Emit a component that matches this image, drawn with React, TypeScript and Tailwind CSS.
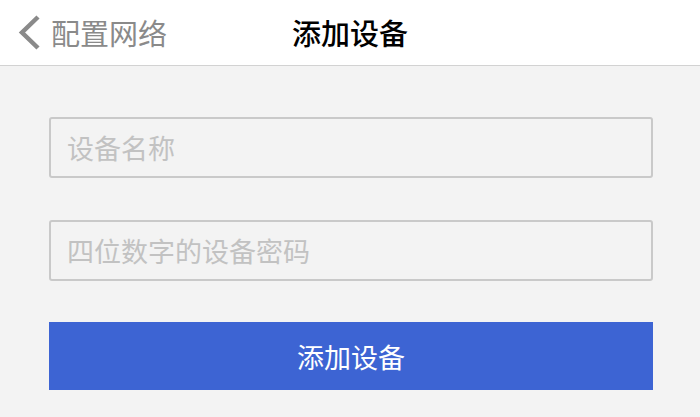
export default function App() {
  return (
    <div
      className="w-[700px] h-[417px] bg-[#f3f3f3] flex flex-col overflow-hidden"
      style={{ fontFamily: '"Noto Sans CJK SC", "Noto Sans", sans-serif' }}
    >
      {/* Header */}
      <div className="relative h-[66px] shrink-0 bg-white border-b border-[#d2d2d2] flex items-center">
        <div className="flex items-center pl-[18px] gap-[10px] text-[#8a8a8a]">
          <svg width="23" height="35" viewBox="0 0 23 35" fill="none">
            <path d="M20 2L4 17.5L20 33" stroke="#8a8a8a" strokeWidth="4.5" strokeLinecap="butt" strokeLinejoin="miter" />
          </svg>
          <span className="text-[29px] leading-none">配置网络</span>
        </div>
        <div className="absolute inset-0 flex items-center justify-center pointer-events-none">
          <span className="text-[29px] leading-none font-medium text-black">添加设备</span>
        </div>
      </div>

      {/* Form */}
      <div className="flex flex-col px-[49px] pt-[51px] w-[702px]">
        <div className="h-[61px] w-[604px] rounded-[3px] border-2 border-[#c9c9c9] bg-[#f3f3f3] flex items-center pl-[16px]">
          <span className="text-[27px] leading-none text-[#c2c2c2]">设备名称</span>
        </div>
        <div className="mt-[42px] h-[61px] w-[604px] rounded-[3px] border-2 border-[#c9c9c9] bg-[#f3f3f3] flex items-center pl-[16px]">
          <span className="text-[27px] leading-none text-[#c2c2c2]">四位数字的设备密码</span>
        </div>
        <button
          type="button"
          className="mt-[41px] h-[68px] w-[604px] bg-[#3d64d3] flex items-center justify-center"
        >
          <span className="text-[27px] leading-none text-white">添加设备</span>
        </button>
      </div>
    </div>
  )
}
